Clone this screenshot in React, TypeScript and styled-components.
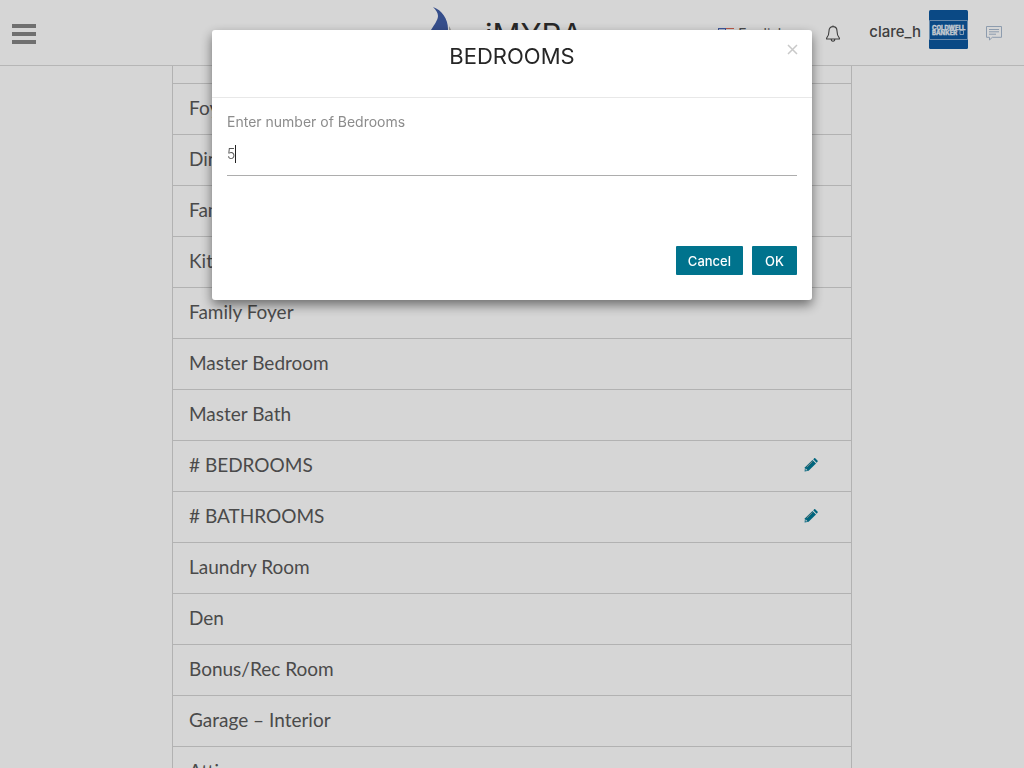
import React, { useState } from "react";
import styled, { createGlobalStyle } from "styled-components";

const GlobalStyle = createGlobalStyle`
  *, *::before, *::after { box-sizing: border-box; }
  body {
    margin: 0;
    overflow: hidden;
    background: #fff;
    color: #595959;
    font-family: Inter, "Open Sans", sans-serif;
  }
  button, input, select { font-family: inherit; }
`;

const Page = styled.div`
  height: 100vh;
  overflow: hidden;
`;

const TopBar = styled.header`
  display: grid;
  grid-template-columns: minmax(0, 1fr) auto minmax(0, 1fr);
  align-items: center;
  height: 66px;
  padding: 0 22px 0 12px;
  border-bottom: 1px solid #d9d9d9;
`;

const MenuButton = styled.button`
  display: grid;
  gap: 4px;
  width: 24px;
  padding: 2px 0 0;
  border: 0;
  background: none;
`;

const MenuBar = styled.span`
  height: 4px;
  background: #868686;
`;

const Brand = styled.a`
  display: flex;
  align-items: center;
  gap: 32px;
  width: 156px;
  color: #2f2f2f;
  font-size: 31px;
  line-height: 40px;
  text-decoration: none;
  white-space: nowrap;
`;

const BrandName = styled.span`
  padding-top: 4px;
`;

const Tools = styled.div`
  display: flex;
  align-items: center;
  justify-content: flex-end;
  padding-top: 2px;
`;

const Language = styled.label`
  display: flex;
  align-items: center;
  gap: 4px;
  margin-right: 26px;
`;

const LanguageSelect = styled.select`
  width: 62px;
  padding: 0;
  border: 0;
  appearance: none;
  background: none;
  color: #595959;
  font-size: 14px;
`;

const IconButton = styled.button`
  display: flex;
  padding: 0;
  border: 0;
  background: none;
  color: ${(p) => p.color};
`;

const Account = styled.a`
  display: flex;
  align-items: center;
  gap: 8px;
  margin: 0 18px 8px 29px;
  color: #4b4b4b;
  font-size: 15px;
  font-weight: 500;
  line-height: 20px;
  text-decoration: none;
`;

const UserName = styled.span`
  padding-top: 4px;
`;

const RoomList = styled.ul`
  width: calc(100% - 32px);
  max-width: 680px;
  margin: 0 auto;
  padding: 18px 0 0;
  border: 1px solid #d4d4d4;
  border-top: 0;
  list-style: none;
`;

const RoomRow = styled.li`
  display: flex;
  align-items: center;
  justify-content: space-between;
  height: 51px;
  padding: 0 33px 2px 16px;
  border-top: 1px solid #d4d4d4;
  font-family: Lato, "Open Sans", sans-serif;
  font-size: 19px;
  line-height: 24px;

  &:first-child { margin-top: -1px; }
`;

const Backdrop = styled.div`
  position: fixed;
  inset: 0;
  padding: 30px 16px;
  background: rgba(0, 0, 0, 0.16);
`;

const Dialog = styled.form`
  max-width: 600px;
  margin: 0 auto;
  border-radius: 3px;
  background: #fff;
  box-shadow: 0 5px 12px rgba(0, 0, 0, 0.5);
`;

const DialogHeader = styled.div`
  display: grid;
  grid-template-columns: 16px 1fr 16px;
  align-items: start;
  height: 68px;
  padding: 12px 12px 0;
  border-bottom: 1px solid #e8e8e8;
`;

const DialogTitle = styled.h1`
  grid-column: 2;
  margin: 0;
  color: #262626;
  font-size: 22px;
  font-weight: 400;
  line-height: 28px;
  text-align: center;
`;

const DialogBody = styled.div`
  padding: 15px 15px 0;
`;

const FieldLabel = styled.label`
  display: block;
  color: #8c8c8c;
  font-size: 14px;
  line-height: 18px;
`;

const Field = styled.div`
  position: relative;
  border-bottom: 1px solid #adadad;
`;

const NumberInput = styled.input`
  display: block;
  width: 100%;
  height: 44px;
  padding: 0;
  border: 0;
  outline: 0;
  background: none;
  color: #555;
  font-size: 14px;
  font-weight: 300;
  caret-color: transparent;
`;

const Caret = styled.span`
  position: absolute;
  top: 14px;
  left: 8px;
  width: 1px;
  height: 18px;
  background: #222;
`;

const DialogActions = styled.div`
  display: flex;
  justify-content: flex-end;
  gap: 9px;
  padding: 70px 15px 25px;
`;

const ActionButton = styled.button`
  min-width: 45px;
  height: 29px;
  padding: 2px 12px 0;
  border: 0;
  border-radius: 1px;
  background: #00738d;
  color: #fff;
  font-size: 13px;
  font-weight: 500;
  line-height: 27px;
`;

const rooms: { name: string; editable?: boolean }[] = [
  { name: "Foyer" },
  { name: "Dining Room" },
  { name: "Family Room" },
  { name: "Kitchen" },
  { name: "Family Foyer" },
  { name: "Master Bedroom" },
  { name: "Master Bath" },
  { name: "# BEDROOMS", editable: true },
  { name: "# BATHROOMS", editable: true },
  { name: "Laundry Room" },
  { name: "Den" },
  { name: "Bonus/Rec Room" },
  { name: "Garage – Interior" },
  { name: "Attic" },
];

const Flame = () => (
  <svg width="24" height="52" viewBox="0 0 24 52" aria-hidden="true">
    <path d="M1 0C10 3 16 12 16 22C16 34 11 44 4 50C-4 43-5 31-1 23C2 18 6 13 6 9C6 6 4 3 1 0Z" transform="translate(3 0)" fill="#405da6" />
    <path d="M20 19C25 27 23 39 11 48C19 38 21 30 20 19Z" fill="#a5a39e" />
  </svg>
);

const Flag = () => (
  <svg width="16" height="12" viewBox="0 0 16 12" aria-hidden="true">
    <path d="M0 0h16v12H0z" fill="#fff" />
    <path d="M0 .5h16M0 3.5h16M0 6.5h16M0 9.5h16M0 11.5h16" stroke="#e06a55" />
    <path d="M0 0h8v6H0z" fill="#4967ba" />
    <path d="M1 1.5h6M1 3.5h6" stroke="#d5def5" />
  </svg>
);

const Bell = () => (
  <svg width="14" height="17" viewBox="0 0 14 17" fill="none" stroke="currentColor" strokeWidth="1.1" strokeLinejoin="round" aria-hidden="true">
    <path d="M7 .5v1.1M7 1.6c-2.6 0-4 1.9-4 4.4 0 4-1 5.7-2.4 7.2v.8h12.8v-.8C12 11.7 11 10 11 6c0-2.5-1.4-4.4-4-4.4ZM5.2 14c0 1.4.7 2.2 1.8 2.2S8.8 15.4 8.8 14" />
  </svg>
);

const Avatar = () => (
  <svg width="39" height="39" viewBox="0 0 39 39" role="img" aria-label="Coldwell Banker">
    <rect width="39" height="39" rx="1.5" fill="#0d579f" />
    <path d="M.5 10.5h38v19H.5z" fill="none" stroke="#7fa6cc" />
    <g fill="#e7f0f8" stroke="#e7f0f8" strokeWidth=".3" fontFamily="Inter, sans-serif" fontWeight="800" fontSize="6">
      <text x="3" y="19.5">COLDWELL</text>
      <text x="3" y="24.8">BANKER</text>
    </g>
    <path d="M31 20.5h3.5v4H31z" fill="none" stroke="#c3d6e8" strokeWidth=".8" />
  </svg>
);

const Chat = () => (
  <svg width="16" height="15" viewBox="0 0 16 15" fill="none" stroke="currentColor" aria-hidden="true">
    <path d="M.5.5h15v10.8H6.3L3.5 14v-2.7h-3zM3 3.5h10M3 5.8h10M3 8.2h7" />
  </svg>
);

const Pencil = () => (
  <svg width="14" height="14" viewBox="0 0 14 14" aria-hidden="true">
    <path d="M1 9.3 8.5 2l3.5 3.5L4.6 12.8.6 13.4Z" fill="#007996" />
    <path d="M9.2 1.3l.9-.9c.4-.4.9-.4 1.3 0l2.1 2.1c.4.4.4.9 0 1.3l-.9.9Z" fill="#007996" />
    <path d="M2.8 9 8.5 3.4" stroke="#b8a99c" strokeWidth=".9" />
    <path d="M1.5 10.3 3.6 12.3 1.5 12.6Z" fill="#f2f2f2" />
  </svg>
);

const Cross = () => (
  <svg width="11" height="11" viewBox="0 0 11 11" fill="none" stroke="currentColor" strokeWidth="1.5" aria-hidden="true">
    <path d="M1 1l9 9M10 1l-9 9" />
  </svg>
);

const CloseButton = styled(IconButton)`
  margin-top: 2px;
  justify-content: center;
`;

export default function App() {
  const [count, setCount] = useState("5");
  return (
    <Page>
      <GlobalStyle />
      <TopBar>
        <MenuButton type="button" aria-label="Menu">
          <MenuBar />
          <MenuBar />
          <MenuBar />
        </MenuButton>
        <Brand href="#">
          <Flame />
          <BrandName>iMYRA</BrandName>
        </Brand>
        <Tools>
          <Language>
            <Flag />
            <LanguageSelect aria-label="Language">
              <option>English</option>
            </LanguageSelect>
          </Language>
          <IconButton type="button" color="#4a4a4a" aria-label="Notifications">
            <Bell />
          </IconButton>
          <Account href="#">
            <UserName>clare_h</UserName>
            <Avatar />
          </Account>
          <IconButton type="button" color="#a9bad0" aria-label="Messages">
            <Chat />
          </IconButton>
        </Tools>
      </TopBar>
      <RoomList>
        {rooms.map((room) => (
          <RoomRow key={room.name}>
            {room.name}
            {room.editable && (
              <IconButton type="button" aria-label={`Edit ${room.name}`}>
                <Pencil />
              </IconButton>
            )}
          </RoomRow>
        ))}
      </RoomList>
      <Backdrop>
        <Dialog role="dialog" aria-labelledby="dialog-title" onSubmit={(e) => e.preventDefault()}>
          <DialogHeader>
            <DialogTitle id="dialog-title">BEDROOMS</DialogTitle>
            <CloseButton type="button" color="#c9c9c9" aria-label="Close">
              <Cross />
            </CloseButton>
          </DialogHeader>
          <DialogBody>
            <FieldLabel htmlFor="bedroom-count">Enter number of Bedrooms</FieldLabel>
            <Field>
              <NumberInput
                id="bedroom-count"
                inputMode="numeric"
                value={count}
                onChange={(e) => setCount(e.target.value)}
              />
              <Caret />
            </Field>
          </DialogBody>
          <DialogActions>
            <ActionButton type="button">Cancel</ActionButton>
            <ActionButton type="submit">OK</ActionButton>
          </DialogActions>
        </Dialog>
      </Backdrop>
    </Page>
  );
}
